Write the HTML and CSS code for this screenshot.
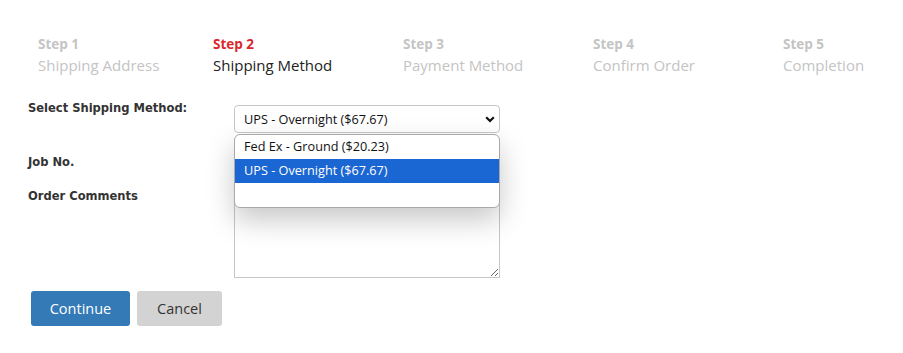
FILE: index.html
```html
<!DOCTYPE html>
<html lang="en">
<head>
    <meta charset="UTF-8">
    <title>Checkout - Shipping Method</title>
    <link rel="stylesheet" href="styles.css">
</head>
<body>
    <div class="steps">
        <div class="step">
            <div class="step-num">Step 1</div>
            <div class="step-name">Shipping Address</div>
        </div>
        <div class="step active">
            <div class="step-num">Step 2</div>
            <div class="step-name">Shipping Method</div>
        </div>
        <div class="step">
            <div class="step-num">Step 3</div>
            <div class="step-name">Payment Method</div>
        </div>
        <div class="step">
            <div class="step-num">Step 4</div>
            <div class="step-name">Confirm Order</div>
        </div>
        <div class="step">
            <div class="step-num">Step 5</div>
            <div class="step-name">Completion</div>
        </div>
    </div>

    <form class="ship-form">
        <div class="form-row first">
            <label class="form-label">Select Shipping Method:</label>
            <div class="select-wrap">
                <div class="fake-select">
                    <span>UPS - Overnight ($67.67)</span>
                    <svg class="chevron" width="10" height="7" viewBox="0 0 10 7">
                        <path d="M1.2 1.2 L5 5 L8.8 1.2" fill="none" stroke="#111" stroke-width="2.2"/>
                    </svg>
                </div>
                <ul class="dropdown">
                    <li>Fed Ex - Ground ($20.23)</li>
                    <li class="selected">UPS - Overnight ($67.67)</li>
                    <li></li>
                </ul>
            </div>
        </div>

        <div class="form-row middle">
            <label class="form-label">Job No.</label>
            <input type="text" class="text-input">
        </div>

        <div class="form-row top">
            <label class="form-label">Order Comments</label>
            <textarea class="comments"></textarea>
        </div>

        <div class="buttons">
            <button type="button" class="btn btn-continue">Continue</button>
            <button type="button" class="btn btn-cancel">Cancel</button>
        </div>
    </form>
</body>
</html>
```

FILE: styles.css
```css
body {
    margin: 0;
    padding: 0;
    background: #fff;
    font-family: "Open Sans", sans-serif;
    color: #333;
}

/* checkout steps */
.steps {
    display: grid;
    grid-template-columns: 175px 190px 190px 190px 1fr;
    padding: 35px 0 0 38px;
}

.step-num {
    font-size: 13.5px;
    line-height: 19px;
    font-weight: 700;
    color: #c4c4c4;
}

.step-name {
    font-size: 15px;
    line-height: 22px;
    color: #c4c4c4;
}

.step.active .step-num {
    color: #d9282c;
}

.step.active .step-name {
    color: #222;
}

/* form */
.ship-form {
    padding-left: 28px;
}

.form-row {
    display: flex;
}

.form-row.first {
    margin-top: 24px;
    align-items: flex-start;
}

.form-row.middle {
    margin-top: 15px;
    align-items: center;
}

.form-row.top {
    margin-top: 12px;
    align-items: flex-start;
}

.form-label {
    width: 206px;
    flex-shrink: 0;
    font-family: "DejaVu Sans Condensed", "DejaVu Sans", sans-serif;
    font-weight: 700;
    font-size: 12.8px;
    line-height: 16px;
    color: #333;
}

.select-wrap {
    position: relative;
    margin-top: 5px;
    width: 266px;
}

.fake-select {
    box-sizing: border-box;
    height: 28px;
    border: 1px solid #c6c6c6;
    border-radius: 4px;
    display: flex;
    align-items: center;
    justify-content: space-between;
    padding: 0 4px 0 9px;
    font-size: 12.7px;
    color: #111;
}

.dropdown {
    position: absolute;
    top: 29px;
    left: 0;
    width: 266px;
    box-sizing: border-box;
    margin: 0;
    padding: 0;
    list-style: none;
    background: #fff;
    border: 1px solid #a9a9a9;
    border-radius: 6px;
    overflow: hidden;
    box-shadow: 0 12px 28px rgba(0, 0, 0, 0.22);
    z-index: 10;
}

.dropdown li {
    height: 24px;
    line-height: 23px;
    padding-left: 9px;
    font-size: 12.7px;
    color: #111;
}

.dropdown li.selected {
    background: #1a66d2;
    color: #fff;
}

.text-input {
    box-sizing: border-box;
    width: 266px;
    height: 28px;
    border: 1px solid #c6c6c6;
    border-radius: 3px;
}

.comments {
    box-sizing: border-box;
    width: 266px;
    height: 89px;
    margin: 1px 0 0 0;
    border: 1px solid #c6c6c6;
    border-radius: 0;
    font-family: "Open Sans", sans-serif;
}

/* buttons */
.buttons {
    margin: 13px 0 0 3px;
    display: flex;
    gap: 7px;
}

.btn {
    height: 35px;
    border: none;
    border-radius: 3px;
    font-family: "Open Sans", sans-serif;
    font-size: 14.5px;
    cursor: pointer;
}

.btn-continue {
    width: 99px;
    background: #337ab7;
    color: #fff;
}

.btn-cancel {
    width: 85px;
    background: #d3d3d3;
    color: #333;
}
```
